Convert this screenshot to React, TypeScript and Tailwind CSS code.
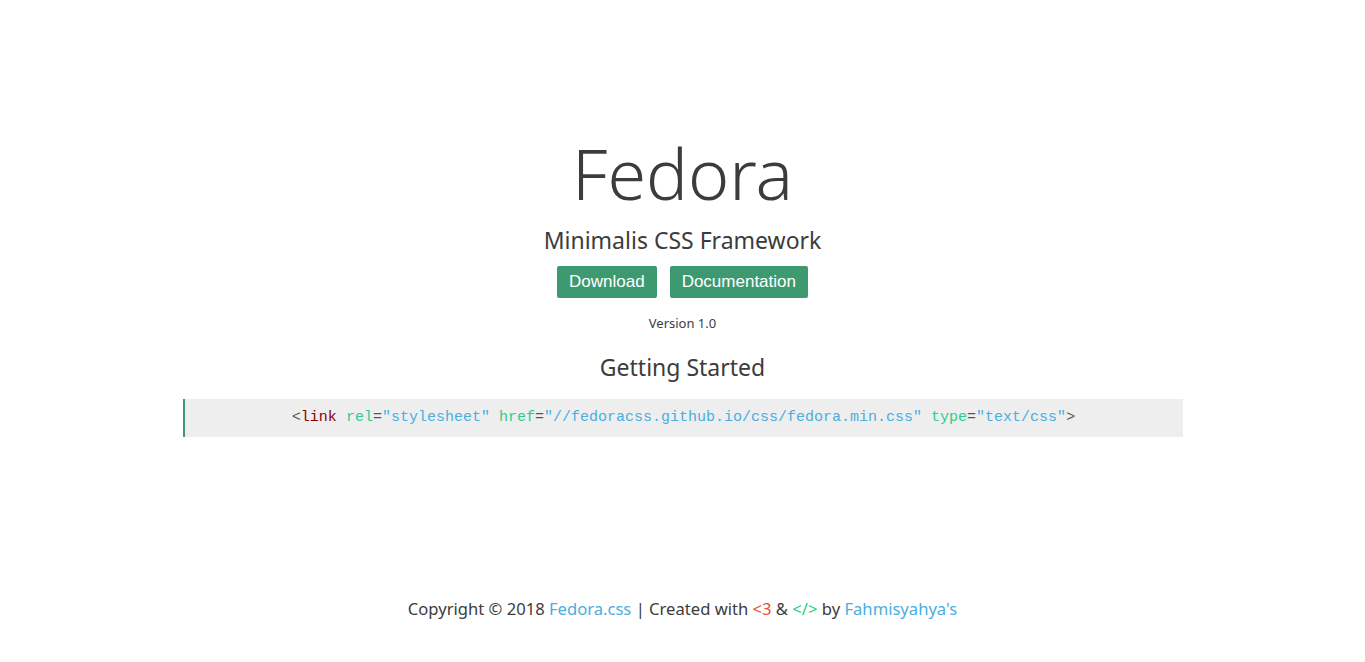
export default function App() {
  const sans = { fontFamily: '"Noto Sans", sans-serif' };
  return (
    <div className="min-h-screen bg-white text-[#3c3c3c]" style={sans}>
      <div className="flex flex-col items-center pt-[138px]">
        <h1 className="text-[70px] leading-none font-light">Fedora</h1>
        <p className="mt-[21px] text-[23px] leading-none">Minimalis CSS Framework</p>
        <div className="mt-[14px] flex gap-[13px] font-['Liberation_Sans',sans-serif]">
          <a className="h-[32px] px-3 flex items-center rounded-[2px] bg-[#3d9970] text-white text-[17px]">Download</a>
          <a className="h-[32px] px-3 flex items-center rounded-[2px] bg-[#3d9970] text-white text-[17px]">Documentation</a>
        </div>
        <p className="mt-[19px] text-[13px] leading-none">Version 1.0</p>
        <h2 className="mt-[26px] text-[23px] leading-none">Getting Started</h2>
        <div className="mt-[20px] w-[1000px] h-[38px] bg-[#eeeeee] border-l-2 border-[#3d9970] flex items-center justify-center">
          <code className="font-['Liberation_Mono',monospace] text-[15px] text-[#555]">
            &lt;<span className="text-[#8b0000]">link</span> <span className="text-[#2ecc8f]">rel</span>=<span className="text-[#4aaee0]">"stylesheet"</span>{' '}
            <span className="text-[#2ecc8f]">href</span>=<span className="text-[#4aaee0]">"//fedoracss.github.io/css/fedora.min.css"</span>{' '}
            <span className="text-[#2ecc8f]">type</span>=<span className="text-[#4aaee0]">"text/css"</span>&gt;
          </code>
        </div>
        <footer className="mt-[164px] text-[16.6px] leading-none">
          Copyright © 2018 <span className="text-[#4aaee0]">Fedora.css</span> | Created with{' '}
          <span className="text-[#e74c3c]">&lt;3</span> &amp; <span className="text-[#2ecc8f]">&lt;/&gt;</span> by{' '}
          <span className="text-[#4aaee0]">Fahmisyahya's</span>
        </footer>
      </div>
    </div>
  );
}
